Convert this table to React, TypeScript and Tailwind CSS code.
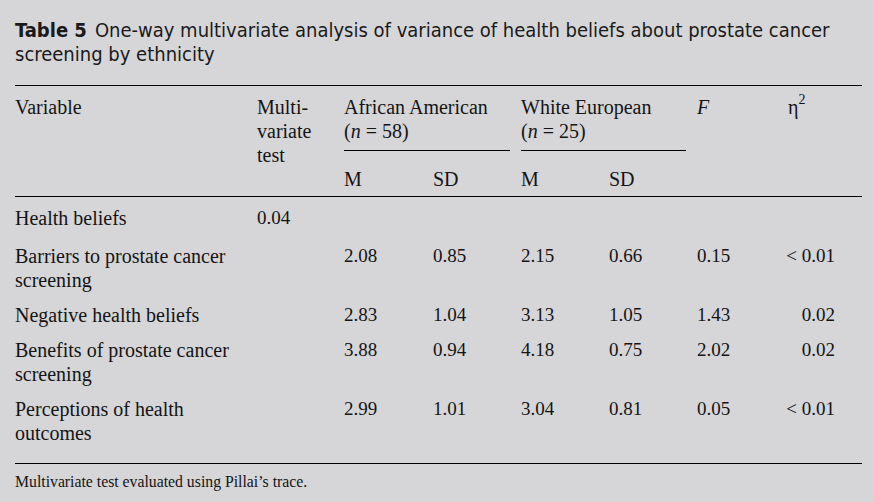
const rows = [
  { label: ['Barriers to prostate cancer', 'screening'], v: ['2.08', '0.85', '2.15', '0.66', '0.15', '< 0.01'], pad: 'pt-[14px]' },
  { label: ['Negative health beliefs'], v: ['2.83', '1.04', '3.13', '1.05', '1.43', '0.02'], pad: 'pt-[11px]' },
  { label: ['Benefits of prostate cancer', 'screening'], v: ['3.88', '0.94', '4.18', '0.75', '2.02', '0.02'], pad: 'pt-[11px]' },
  { label: ['Perceptions of health', 'outcomes'], v: ['2.99', '1.01', '3.04', '0.81', '0.05', '< 0.01'], pad: 'pt-[11px]' },
];

const cols = 'grid grid-cols-[242px_87px_89px_88px_88px_88px_70px_95px]';

export default function App() {
  return (
    <div className="w-[874px] h-[502px] bg-[#d6d6d8] pl-[15px] pr-[12px] text-[#141414] overflow-hidden">
      <h2 className="pt-[18px] text-[20px] leading-[24px] font-['Liberation_Sans_Narrow','DejaVu_Sans_Condensed',sans-serif] text-[#1a1a1a]">
        <span className="font-bold">Table 5</span>
        <span className="ml-[8px]">One-way multivariate analysis of variance of health beliefs about prostate cancer</span>
        <br />
        screening by ethnicity
      </h2>

      <div className="mt-[19px] font-['Liberation_Serif',serif] text-[19px] leading-[24px]">
        {/* header */}
        <div className={`${cols} border-t border-black pt-[9px] pb-[5px] text-[20px]`}>
          <div className="row-span-2">Variable</div>
          <div className="row-span-2">
            Multi-
            <br />
            variate
            <br />
            test
          </div>
          <div className="col-span-2 mr-[11px] border-b border-black pb-[7px]">
            African American
            <br />(<i>n</i> = 58)
          </div>
          <div className="col-span-2 mr-[11px] border-b border-black pb-[7px]">
            White European
            <br />(<i>n</i> = 25)
          </div>
          <div>
            <i>F</i>
          </div>
          <div className="pl-[21px]">
            <span>η</span>
            <sup className="text-[14px] -top-[10px]">2</sup>
          </div>
          <div className="col-start-3 pt-[16px]">M</div>
          <div className="pt-[16px]">SD</div>
          <div className="pt-[16px]">M</div>
          <div className="pt-[16px]">SD</div>
        </div>

        {/* body */}
        <div className="border-t border-black pt-[9px] pb-[18px]">
          <div className={cols}>
            <div className="text-[20px]">Health beliefs</div>
            <div>0.04</div>
          </div>
          {rows.map((r) => (
            <div key={r.label[0]} className={`${cols} ${r.pad}`}>
              <div className="text-[20px]">
                {r.label.map((l) => (
                  <div key={l}>{l}</div>
                ))}
              </div>
              <div />
              {r.v.slice(0, 5).map((x, i) => (
                <div key={i}>{x}</div>
              ))}
              <div className="text-right whitespace-nowrap pr-[27px]">{r.v[5]}</div>
            </div>
          ))}
        </div>

        <div className="border-t border-black pt-[8px] text-[15.75px] leading-[20px]">
          Multivariate test evaluated using Pillai’s trace.
        </div>
      </div>
    </div>
  );
}
